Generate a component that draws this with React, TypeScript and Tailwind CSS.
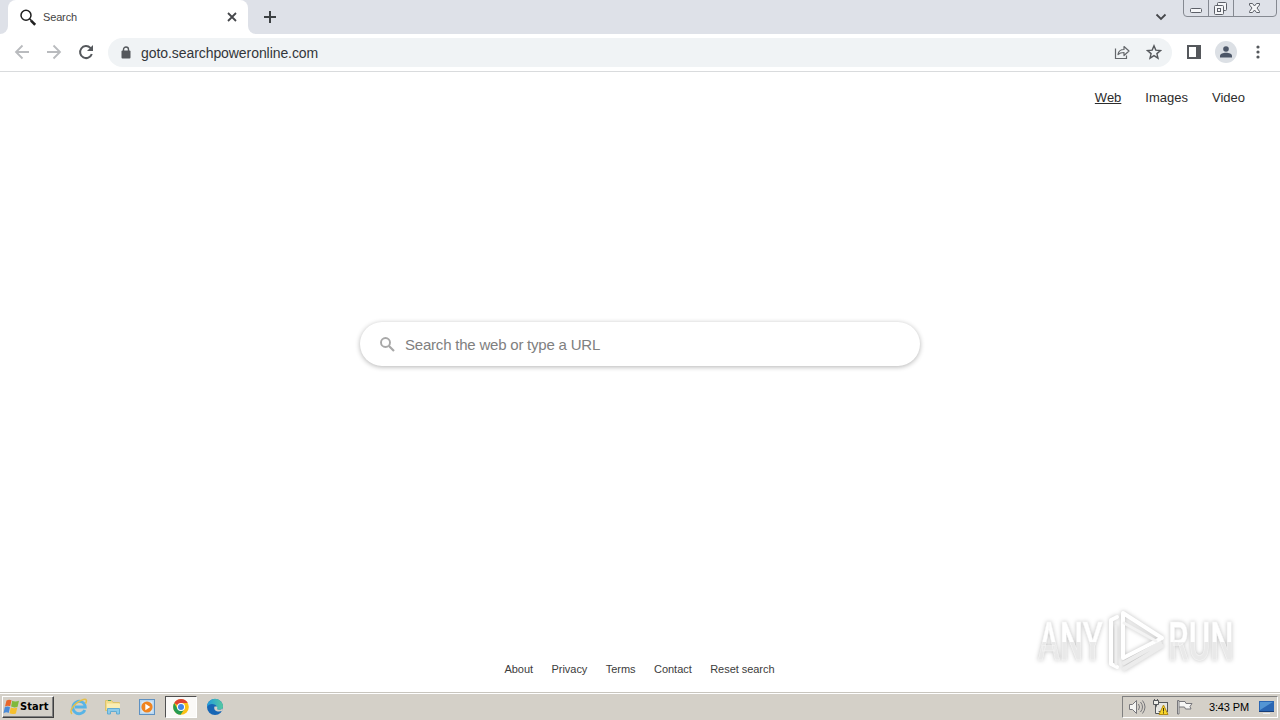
import React from "react";

// Links along the bottom of the search page
const FOOTER_LINKS = ["About", "Privacy", "Terms", "Contact", "Reset search"];

function TabStrip() {
  return (
    <div className="flex h-[34px] shrink-0 items-start bg-[#dee1e8]">
      <div className="flex h-[34px] w-2 items-end bg-white">
        <div className="h-full w-2 rounded-br-lg bg-[#dee1e8]" />
      </div>
      <div className="flex h-[34px] w-60 items-center rounded-t-lg bg-white pr-[10px] pl-3">
        <svg width="16" height="17" viewBox="0 0 16 17" fill="none" stroke="#202020">
          <circle cx="6" cy="6.2" r="5" strokeWidth="1.5" />
          <path d="M9.6 9.8l1.8 1.8" strokeWidth="1.5" />
          <path d="M11 11.6l4.2 4.2" strokeWidth="2.6" />
        </svg>
        <span className="ml-[7px] text-[11px] tracking-[-0.15px] text-[#444]">Search</span>
        <svg className="ml-auto" width="12" height="12" viewBox="0 0 12 12" stroke="#45474b" strokeWidth="1.8">
          <path d="M2 2l8 8M10 2l-8 8" />
        </svg>
      </div>
      <div className="flex h-[34px] w-2 items-end bg-white">
        <div className="h-full w-2 rounded-bl-lg bg-[#dee1e8]" />
      </div>
      <svg className="mt-[11px] ml-2" width="12" height="12" viewBox="0 0 12 12" stroke="#3c4043" strokeWidth="2">
        <path d="M6 0v12M0 6h12" />
      </svg>
      <svg
        className="mt-[11px] ml-auto"
        width="12"
        height="12"
        viewBox="0 0 12 12"
        fill="none"
        stroke="#45474b"
        strokeWidth="1.8"
      >
        <path d="M1.5 3.5L6 8l4.5-4.5" />
      </svg>
      <WindowButtons />
    </div>
  );
}

function WindowButtons() {
  return (
    <svg className="mr-[3px] ml-4" width="94" height="18" viewBox="0 0 94 18" fill="none">
      <path d="M.5 0v13q0 3.5 3.5 3.5h86q3.5 0 3.5-3.5V0M25.5 0v16M50.5 0v16" stroke="#858991" />
      <rect x="7.5" y="8.5" width="11" height="4" rx="1" fill="#f5f6f8" stroke="#5d6068" />
      <rect x="34.5" y="2.5" width="9" height="8" rx="1" fill="#f5f6f8" stroke="#5d6068" />
      <rect x="31.5" y="5.5" width="9" height="9" rx="1" fill="#f5f6f8" stroke="#5d6068" />
      <rect x="34.5" y="8.5" width="3" height="3" stroke="#5d6068" />
      <path
        d="M66.500 3.500h3l2 2.500 2-2.500h3v1.500L74 8l2.500 3.500v1h-3l-2-2.500-2 2.500h-3v-1L69 8l-2.500-3z"
        fill="#f5f6f8"
        stroke="#5d6068"
      />
    </svg>
  );
}

function Toolbar() {
  return (
    <div className="flex h-[38px] shrink-0 items-center border-b border-[#d9dbdd] bg-white pl-3.5">
      <svg
        className="mb-px"
        width="16"
        height="16"
        viewBox="0 0 16 16"
        fill="none"
        stroke="#b9bbbe"
        strokeWidth="1.8"
      >
        <path d="M15 8H2M8.500 1.500L2 8l6.500 6.500" />
      </svg>
      <svg
        className="mb-px ml-4"
        width="16"
        height="16"
        viewBox="0 0 16 16"
        fill="none"
        stroke="#b9bbbe"
        strokeWidth="1.8"
      >
        <path d="M1 8h13M7.500 1.500L14 8l-6.500 6.500" />
      </svg>
      <svg
        className="mb-px ml-4"
        width="16"
        height="16"
        viewBox="0 0 16 16"
        fill="none"
        stroke="#55585c"
        strokeWidth="2"
      >
        <path d="M13.800 10A6 6 0 1 1 12.400 3.900L14 5.500" />
        <path d="M15 1v6H9z" fill="#55585c" stroke="none" />
      </svg>
      <div className="ml-3.5 flex h-[29px] w-[1064px] items-center rounded-full bg-[#f0f3f5] pr-2.5 pl-[13px]">
        <svg className="mb-px" width="10" height="13" viewBox="0 0 10 13" fill="none">
          <rect x=".5" y="4.5" width="9" height="8" rx="1" fill="#55585c" />
          <path d="M2.500 5V3.500a2.500 2.500 0 0 1 5 0V5" stroke="#55585c" strokeWidth="1.4" />
        </svg>
        <span className="mt-px ml-[10px] text-[14px] tracking-[-0.07px] text-[#33363a]">goto.searchpoweronline.com</span>
        <svg
          className="mb-px ml-auto"
          width="16"
          height="16"
          viewBox="0 0 16 16"
          fill="none"
          stroke="#64676b"
          strokeWidth="1.2"
        >
          <path d="M1.500 4.500v10h11v-3" />
          <path d="M4 10.500c.5-3.500 2.500-5 6-5V2.500L15 7l-5 4.500v-3c-2.500 0-4.500.5-6 2z" strokeLinejoin="round" />
        </svg>
        <svg
          className="mb-px ml-4"
          width="16"
          height="16"
          viewBox="0 0 16 16"
          fill="none"
          stroke="#55585c"
          strokeWidth="1.4"
        >
          <path d="M8 1.800l1.800 4.300 4.700.4-3.600 3.100 1.100 4.600-4-2.500-4 2.500 1.100-4.600-3.600-3.100 4.700-.4z" />
        </svg>
      </div>
      <svg className="mb-px ml-[15px]" width="14" height="14" viewBox="0 0 14 14" fill="none">
        <rect x="1" y="1" width="12" height="12" stroke="#55585c" strokeWidth="2" />
        <rect x="9" y="1" width="4" height="12" fill="#55585c" />
      </svg>
      <div className="mb-px ml-3.5 flex size-[22px] items-center justify-center rounded-full bg-[#dce0e5]">
        <svg width="12" height="12" viewBox="0 0 12 12" fill="#4d5768">
          <circle cx="6" cy="3" r="2.8" />
          <path d="M0 11.500V10c0-2.200 3-3.200 6-3.200s6 1 6 3.200v1.500z" />
        </svg>
      </div>
      <svg className="mb-px ml-[19px]" width="4" height="14" viewBox="0 0 4 14" fill="#55585c">
        <circle cx="2" cy="2" r="1.6" />
        <circle cx="2" cy="7" r="1.6" />
        <circle cx="2" cy="12" r="1.6" />
      </svg>
    </div>
  );
}

function Watermark() {
  return (
    <svg
      className="absolute right-[38px] bottom-[10px] drop-shadow-[0_0_2px_rgba(0,0,0,0.25)]"
      width="212"
      height="76"
      viewBox="0 0 212 76"
      fill="none"
    >
      <defs>
        <linearGradient id="letters" x1="0" y1="0" x2="0" y2="1">
          <stop offset="0.5" stopColor="#fff" />
          <stop offset="0.5" stopColor="#e9e9e9" />
        </linearGradient>
      </defs>
      <g
        fontFamily="Roboto, sans-serif"
        fontSize="53"
        fontWeight="500"
        fill="url(#letters)"
        stroke="#f7f7f7"
        strokeWidth="0.6"
      >
        <text transform="translate(8 54) scale(0.62 1)">ANY</text>
        <text transform="translate(138 54) scale(0.62 1)">RUN</text>
      </g>
      <g strokeLinejoin="round" strokeLinecap="round">
        {/* back layer of the play mark */}
        <path d="M87 11l-6 3v44l6 3" stroke="#fff" strokeWidth="4" />
        <path d="M86 58V20" stroke="#eeeeee" strokeWidth="3" />
        <path d="M94 63l38-23M94 57l36-20" stroke="#ececec" strokeWidth="4" />
        <path d="M93 7v45l39-20z" stroke="#fff" strokeWidth="4" />
        <path d="M94 17l32 18" stroke="#f3f3f3" strokeWidth="3" />
      </g>
    </svg>
  );
}

function SearchPage() {
  return (
    <main className="relative flex flex-1 flex-col items-center bg-white">
      <nav className="flex gap-6 self-end pt-[17px] pr-[35px] text-[13px] leading-[18px] text-[#2c2c2c]">
        <a className="underline">Web</a>
        <a>Images</a>
        <a>Video</a>
      </nav>
      <div className="mt-[215px] flex h-11 w-[560px] items-center rounded-full bg-white pl-5 shadow-[0_1px_5px_rgba(0,0,0,0.3)]">
        <svg width="15" height="15" viewBox="0 0 15 15" fill="none" stroke="#a8a8a8">
          <circle cx="5.5" cy="5.5" r="4.5" strokeWidth="1.9" />
          <path d="M9 9l5 5" strokeWidth="2.2" />
        </svg>
        <span className="mt-0.5 ml-[10px] text-[15px] tracking-[-0.21px] text-[#808080]">
          Search the web or type a URL
        </span>
      </div>
      <footer className="mt-auto flex gap-[18.500px] pr-px pb-[15px] text-[11px] leading-4 tracking-[-0.04px] text-[#3c3c3c]">
        {FOOTER_LINKS.map((label) => (
          <a key={label}>{label}</a>
        ))}
      </footer>
      <Watermark />
    </main>
  );
}

function WindowsFlag() {
  return (
    <svg width="17" height="16" viewBox="0 0 16 16">
      <path d="M3 1.500C5 .3 6.500 .5 8 1.300L6.700 7.300C5 6.500 3.500 6.500 1.500 7.500z" fill="#e8672b" />
      <path d="M8.700 1.700c2 1 4.300 1 6.800 0l-1.400 6c-2.200 1-4.500.9-6.500-.1z" fill="#7fb93c" />
      <path d="M1.300 8.300c1.800-1 3.500-.9 5.200-.1L5.200 13.900C3.500 13.100 1.900 13.200 0 14.200z" fill="#4a8bd8" />
      <path d="M7.300 8.500c2 1 4.200 1 6.500.1L12.400 14.400c-2.200 1-4.400.9-6.400-.1z" fill="#f5bf2d" />
    </svg>
  );
}

function ExplorerIcon() {
  return (
    <svg width="18" height="18" viewBox="0 0 18 18" fill="none">
      <path d="M14.800 12A6.200 6.200 0 1 1 15.300 9H5" stroke="#58b4e6" strokeWidth="2.800" />
      <path d="M2 15.800C-1.500 13 5 4 13.500 1.500c3.500-.8 3.500 1.500 2 4" stroke="#e4bf4a" strokeWidth="1.500" />
    </svg>
  );
}

function FolderIcon() {
  return (
    <svg width="18" height="18" viewBox="0 0 18 18" fill="none">
      <path d="M1.500 2.500h6l1.500 2h6.500v8h-14z" fill="#f3dc88" stroke="#dcc36c" />
      <path d="M4 2.500h3" stroke="#50a36b" />
      <path d="M3 5.500h13v6H3z" fill="#faeeb4" />
      <path d="M3.500 16v-5.500h12V16h-3v-2.500h-6V16z" fill="#8ccbea" stroke="#62acd3" />
    </svg>
  );
}

function PlayerIcon() {
  return (
    <svg width="18" height="18" viewBox="0 0 18 18" fill="none">
      <rect x="1.5" y="1.5" width="15" height="15" fill="#b9d7f0" stroke="#5e91c2" />
      <rect x="3.5" y="3.5" width="11" height="11" fill="#dcebf7" />
      <circle cx="9" cy="9" r="5.6" fill="#ef8420" />
      <path d="M7.300 5.700v6.600L12.300 9z" fill="#fff" />
    </svg>
  );
}

function ChromeIcon() {
  return (
    <svg width="16" height="16" viewBox="0 0 16 16">
      <circle cx="8" cy="8" r="7.8" fill="#fbc116" />
      <path d="M8 8L1.200 4.100A7.800 7.800 0 0 1 14.800 4.100H8z" fill="#df4332" />
      <path d="M1.200 4.100A7.800 7.800 0 0 0 7.600 15.800L11.400 10 8 8 4.600 10z" fill="#279b52" />
      <circle cx="8" cy="8" r="4" fill="#fff" />
      <circle cx="8" cy="8" r="3" fill="#4285e8" />
    </svg>
  );
}

function EdgeIcon() {
  return (
    <svg width="18" height="18" viewBox="0 0 18 18">
      <defs>
        <linearGradient id="edge" x1="0" y1="0" x2="1" y2="0">
          <stop offset="0" stopColor="#229cdd" />
          <stop offset="1" stopColor="#55c9a0" />
        </linearGradient>
      </defs>
      <circle cx="9" cy="9" r="8" fill="#1766b5" />
      <path d="M1 9a8 8 0 0 1 16-.5c0 2.500-2 3.500-5 3.200-2-.3-1-1.700-1.300-3C10 5.500 3 4.500 1 9z" fill="url(#edge)" />
      <path d="M8.500 8.500c-1.500 4 3 6 7.500 4.500l1.500-3c-2 2-6 2.300-6.500.8.500-.8.400-1.700-.3-2.300z" fill="#d4d0c8" />
    </svg>
  );
}

function SystemTray() {
  return (
    <div className="mr-0.5 flex h-[22px] w-[156px] items-center border border-t-[#808080] border-r-white border-b-white border-l-[#808080] pr-px pl-[5px]">
      <svg width="18" height="16" viewBox="0 0 18 16" fill="none" stroke="#77777b">
        <path d="M1.500 5.500h3l4-4v13l-4-4h-3z" fill="#f4f4f2" />
        <path d="M10.500 5q2 3 0 6M12.500 3q4 5 0 10M14.500 1.500q5 6.500 0 13" />
      </svg>
      <svg className="ml-1.5" width="17" height="17" viewBox="0 0 17 17" fill="none">
        <rect x="4.5" y="3.5" width="11" height="9" fill="#e5e5e0" stroke="#55585b" />
        <path d="M1.500 1.500h5v4h-5zM3.500 5.500v9h4" fill="#efefea" stroke="#55585b" />
        <path d="M2.500 0v2M5.500 0v2" stroke="#55585b" />
        <path d="M11.500 6l4.500 9.500H7z" fill="#f8d629" stroke="#b48c14" />
        <path d="M11.500 9v3.500M11.500 13.300v1.200" stroke="#41350a" />
      </svg>
      <svg className="ml-[7px]" width="17" height="16" viewBox="0 0 17 16" fill="none">
        <path d="M3 2.500h6l1 2h6l-2 3 1 2.500H9.500l-1-2H3" fill="#f7f7f5" stroke="#77777b" />
        <path d="M1.500 1.500h1.500v13.500H1.500z" fill="#f7f7f5" stroke="#77777b" />
      </svg>
      <span className="ml-[16px] text-[11px] tracking-[-0.15px] whitespace-nowrap text-black">3:43 PM</span>
      <svg className="mr-px ml-auto" width="17" height="15" viewBox="0 0 17 15">
        <path d="M1 1h15v11H1z" fill="#2a66b3" />
        <path d="M2 2h13L2 10z" fill="#5395d4" />
        <path d="M1 11.500h15" stroke="#173d78" />
        <path d="M5 13.500h7" stroke="#e9edf2" />
      </svg>
    </div>
  );
}

function Taskbar() {
  return (
    <div className="flex h-[28px] shrink-0 items-center border-t border-[#c8c5be] bg-[#d4d0c8] shadow-[inset_0_1px_0_#fff]">
      <button className="mt-px ml-0.5 flex h-[22px] w-[52px] items-center border border-t-white border-r-[#404040] border-b-[#404040] border-l-white shadow-[inset_-1px_-1px_0_#808080]">
        <WindowsFlag />
        <span className="font-['DejaVu_Sans_Condensed','DejaVu_Sans',sans-serif] text-[11px] font-bold tracking-[0.1px] text-black">
          Start
        </span>
      </button>
      <div className="mt-px ml-4 flex items-center">
        <ExplorerIcon />
        <span className="ml-4">
          <FolderIcon />
        </span>
        <span className="ml-4">
          <PlayerIcon />
        </span>
        <div className="ml-[9px] flex h-[22px] w-8 items-center justify-center border border-t-[#505050] border-r-white border-b-white border-l-[#505050] bg-[#faf9f7]">
          <ChromeIcon />
        </div>
        <span className="ml-[9px]">
          <EdgeIcon />
        </span>
      </div>
      <div className="mt-px ml-auto">
        <SystemTray />
      </div>
    </div>
  );
}

export default function App() {
  return (
    <div className="flex h-[720px] w-[1280px] flex-col overflow-hidden bg-white font-['Liberation_Sans',Arial,sans-serif]">
      <TabStrip />
      <Toolbar />
      <SearchPage />
      <Taskbar />
    </div>
  );
}
